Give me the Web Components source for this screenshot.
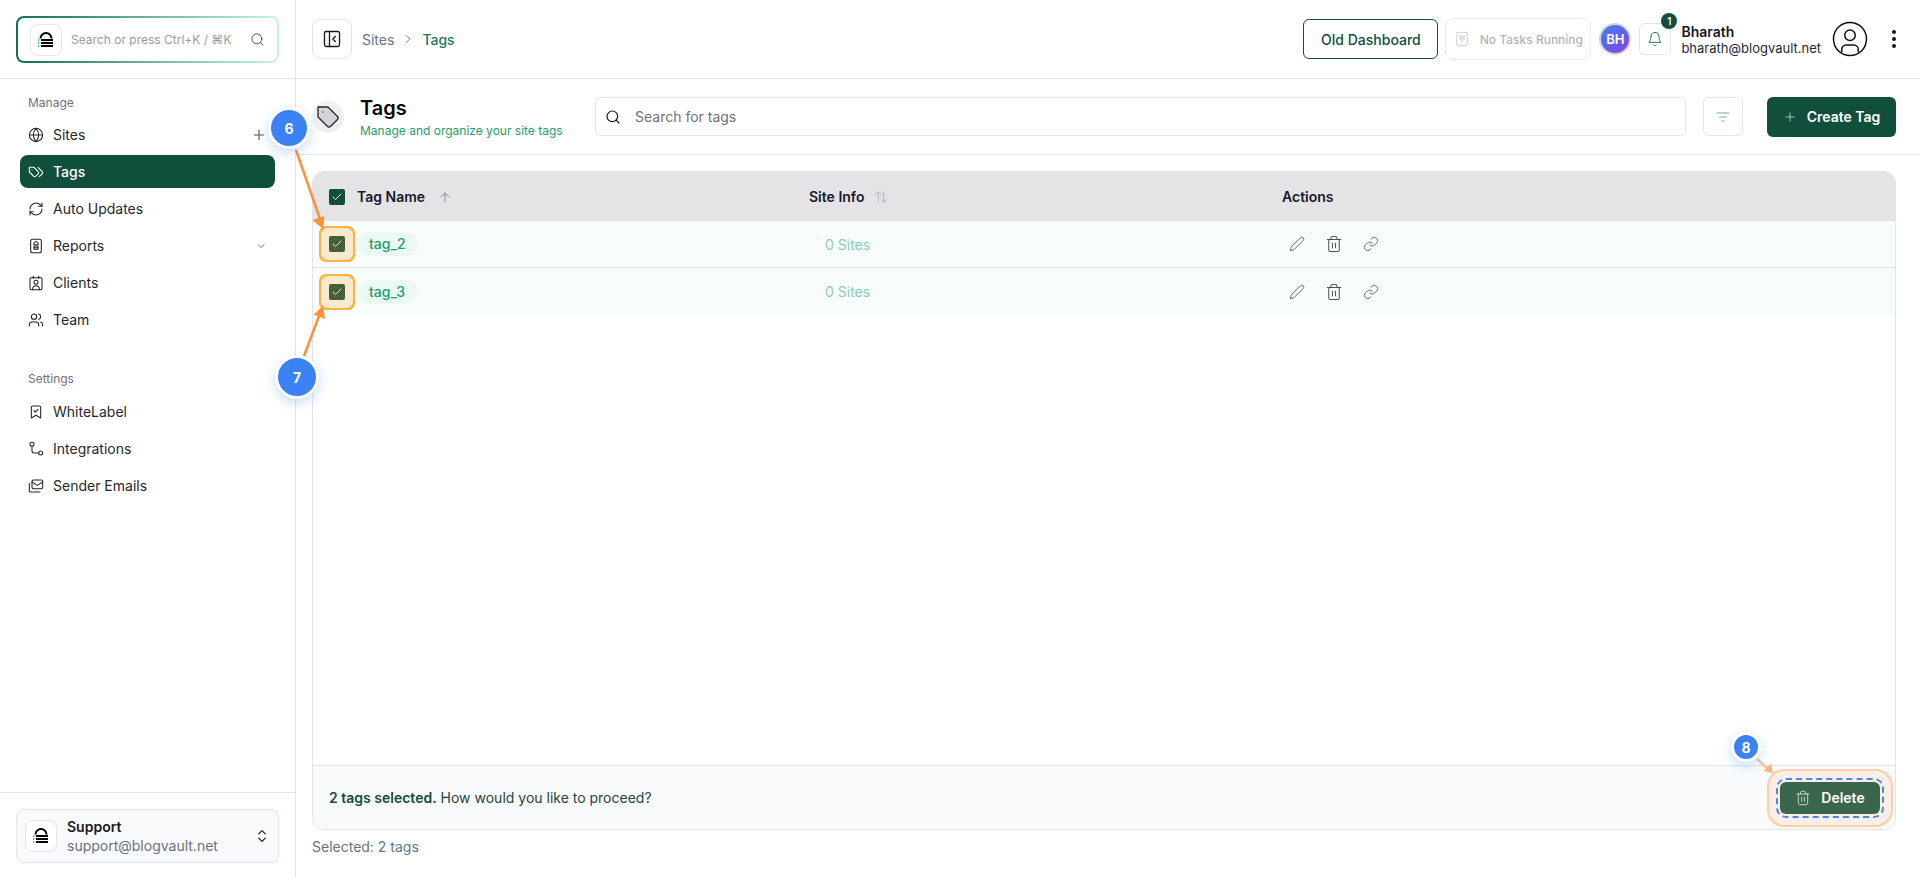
<!DOCTYPE html>
<html lang="en">
<head>
<meta charset="utf-8">
<title>Tags</title>
<style>
  html,body{margin:0;height:100%;overflow:hidden;background:#fff;}
  body{font-family:Inter,"Liberation Sans",sans-serif;color:#18181b;}
</style>
</head>
<body>
<app-shell>
  <side-bar slot="side"></side-bar>
  <top-bar slot="top"></top-bar>
  <page-head slot="main"></page-head>
  <tags-table slot="main"></tags-table>
</app-shell>
<step-overlay></step-overlay>

<script>
(function(document){
  'use strict';

  const P = {
    globe:'<circle cx="12" cy="12" r="10"/><path d="M2 12h20"/><path d="M12 2a15.3 15.3 0 0 1 4 10 15.3 15.3 0 0 1-4 10 15.3 15.3 0 0 1-4-10 15.3 15.3 0 0 1 4-10z"/>',
    tags:'<path d="M9 5H2v7l6.29 6.29c.94.94 2.48.94 3.42 0l3.58-3.58c.94-.94.94-2.48 0-3.42L9 5Z"/><path d="M6 9.01V9"/><path d="m15 5 6.3 6.3a2.4 2.4 0 0 1 0 3.4L17 19"/>',
    refresh:'<path d="M3 12a9 9 0 0 1 9-9 9.75 9.75 0 0 1 6.74 2.74L21 8"/><path d="M21 3v5h-5"/><path d="M21 12a9 9 0 0 1-9 9 9.75 9.75 0 0 1-6.74-2.74L3 16"/><path d="M8 16H3v5"/>',
    report:'<rect x="4" y="2" width="16" height="20" rx="3"/><path d="M12 5l3 2v3H9V7z"/><rect x="9" y="12" width="6" height="5"/><path d="M9 14.500h6"/>',
    clients:'<path d="M16 2v3"/><path d="M8 2v3"/><rect x="3" y="4" width="18" height="18" rx="2"/><circle cx="12" cy="11" r="3"/><path d="M7 22v-1a5 5 0 0 1 10 0v1"/>',
    team:'<path d="M16 21v-2a4 4 0 0 0-4-4H6a4 4 0 0 0-4 4v2"/><circle cx="9" cy="7" r="4"/><path d="M22 21v-2a4 4 0 0 0-3-3.870"/><path d="M16 3.130a4 4 0 0 1 0 7.750"/>',
    bookmark:'<path d="m19 21-7-4-7 4V5a2 2 0 0 1 2-2h10a2 2 0 0 1 2 2v16z"/><path d="m9 10 2 2 4-4"/>',
    route:'<circle cx="6" cy="5" r="3"/><circle cx="19" cy="18" r="3"/><path d="M6 8v7a3 3 0 0 0 3 3h7"/>',
    mails:'<rect x="6" y="3" width="16" height="13" rx="2"/><path d="m6 6 8 5 8-5"/><path d="M2 8v11a2 2 0 0 0 2 2h14"/>',
    search:'<circle cx="11" cy="11" r="8"/><path d="m21 21-4.300-4.300"/>',
    panel:'<rect x="3" y="3" width="18" height="18" rx="2"/><path d="M9 3v18"/><path d="m16 15-3-3 3-3"/>',
    bell:'<path d="M6 8a6 6 0 0 1 12 0c0 7 3 9 3 9H3s3-2 3-9"/><path d="M10.300 21a1.940 1.940 0 0 0 3.400 0"/>',
    pencil:'<path d="M17 3a2.850 2.830 0 1 1 4 4L7.500 20.500 2 22l1.500-5.500Z"/>',
    trash:'<path d="M3 6h18"/><path d="M19 6v14c0 1-1 2-2 2H7c-1 0-2-1-2-2V6"/><path d="M8 6V4c0-1 1-2 2-2h4c1 0 2 1 2 2v2"/><path d="M10 11v6"/><path d="M14 11v6"/>',
    link:'<path d="M10 13a5 5 0 0 0 7.540.540l3-3a5 5 0 0 0-7.070-7.070l-1.720 1.710"/><path d="M14 11a5 5 0 0 0-7.540-.540l-3 3a5 5 0 0 0 7.070 7.070l1.710-1.710"/>',
    filter:'<path d="M3 6h18"/><path d="M7 12h10"/><path d="M10 18h4"/>',
    updown:'<path d="m7 15 5 5 5-5"/><path d="m7 9 5-5 5 5"/>',
    down:'<path d="m6 9 6 6 6-6"/>',
    plus:'<path d="M5 12h14"/><path d="M12 5v14"/>',
    right:'<path d="m9 18 6-6-6-6"/>',
    up:'<path d="M12 20V5"/><path d="m5 12 7-7 7 7"/>',
    sort:'<path d="M8 20V4"/><path d="m3 9 5-5 5 5"/><path d="M16 4v16"/><path d="m11 15 5 5 5-5"/>',
    cpu:'<rect x="4" y="2" width="16" height="20" rx="2" stroke-dasharray="2 2"/><path d="M9 7v6"/><path d="M12 7v9"/><path d="M15 7v6"/>',
    check:'<path d="M20 6 9 17l-5-5"/>',
    tagbig:'<path d="M12 2H2v10l9.290 9.290c.940.940 2.480.940 3.420 0l6.580-6.580c.940-.940.940-2.480 0-3.420L12 2Z" fill="#d4d4d8"/><path d="M7 7h.01"/>',
    user:'<circle cx="12" cy="12" r="11"/><circle cx="12" cy="9.500" r="3.500"/><path d="M6.500 20.500v-1.500a3 3 0 0 1 3-3h5a3 3 0 0 1 3 3v1.500"/>'
  };

  class UiIcon extends HTMLElement{
    constructor(){
      super();
      const s = this.getAttribute('size') || 16;
      const w = this.getAttribute('weight') || 1.6;
      this.attachShadow({mode:'open'}).innerHTML = `
        <style>:host{display:inline-flex;flex:none;width:${s}px;height:${s}px;}svg{display:block;}</style>
        <svg width="${s}" height="${s}" viewBox="0 0 24 24" fill="none" stroke="currentColor" stroke-width="${w}" stroke-linecap="round" stroke-linejoin="round">${P[this.getAttribute('name')]}</svg>`;
    }
  }

  class BvLogo extends HTMLElement{
    constructor(){
      super();
      this.attachShadow({mode:'open'}).innerHTML = `
        <style>
          :host{display:flex;flex:none;width:30px;height:30px;align-items:center;justify-content:center;background:#fff;border:1px solid #e4e4e7;border-radius:8px;}
        </style>
        <svg width="16" height="18" viewBox="0 0 16 18" fill="none">
          <path d="M2.500 7.500a5.500 5.500 0 0 1 11 0" stroke="#000" stroke-width="2"/>
          <path d="M3 9h12M3 12h12M3 15h12" stroke="#000" stroke-width="2"/>
          <path d="M0 9h2M0 12h2M0 15h2" stroke="#22a884" stroke-width="1.500" stroke-dasharray="1 .6"/>
        </svg>`;
    }
  }

  class AppShell extends HTMLElement{
    constructor(){
      super();
      this.attachShadow({mode:'open'}).innerHTML = `
        <style>
          :host{display:flex;width:1920px;height:878px;overflow:hidden;}
          .side{flex:none;width:295px;border-right:1px solid #e2e5ee;}
          .right{flex:1;min-width:0;display:flex;flex-direction:column;}
        </style>
        <div class="side"><slot name="side"></slot></div>
        <div class="right"><slot name="top"></slot><slot name="main"></slot></div>`;
    }
  }

  class NavItem extends HTMLElement{
    constructor(){
      super();
      const on = this.hasAttribute('active');
      this.attachShadow({mode:'open'}).innerHTML = `
        <style>
          :host{display:flex;align-items:center;gap:9px;height:33px;margin-bottom:4px;padding:0 8px;border-radius:8px;font-size:14px;color:${on?'#fff':'#27272a'};background:${on?'#104f3c':'transparent'};font-weight:${on?500:400};}
          .t{flex:1;}
          .e{display:flex;color:#52525b;}
        </style>
        <ui-icon name="${this.getAttribute('icon')}" size="16"></ui-icon>
        <span class="t"><slot></slot></span>
        <span class="e"><slot name="end"></slot></span>`;
    }
  }

  class SideBar extends HTMLElement{
    constructor(){
      super();
      this.attachShadow({mode:'open'}).innerHTML = `
        <style>
          :host{display:flex;flex-direction:column;height:878px;}
          .top{height:79px;box-sizing:border-box;padding:16px 16px 0;border-bottom:1px solid #e4e4e7;}
          .box{display:flex;align-items:center;height:47px;box-sizing:border-box;padding:0 12px;gap:9px;border:2px solid transparent;border-radius:8px;background:linear-gradient(#fff,#fff) padding-box,linear-gradient(90deg,#12704f,#c8f5e0) border-box;font-size:12px;color:#9a9aa2;}
          .box span{flex:1;white-space:nowrap;}
          .box ui-icon{color:#52525b;}
          nav{flex:1;padding:15px 20px 0;}
          h4{margin:0;height:18px;line-height:18px;padding:0 8px;margin-bottom:6px;font-size:12px;font-weight:400;color:#71717a;}
          h4.s{margin-top:34px;margin-bottom:7px;}
          .foot{height:86px;box-sizing:border-box;padding:16px;border-top:1px solid #e2e5ee;}
          .card{display:flex;align-items:center;height:54px;box-sizing:border-box;padding:0 8px;gap:10px;border:1px solid #e2e5ee;border-radius:8px;background:#f9fafb;}
          .who{flex:1;line-height:19px;}
          .who b{display:block;font-size:14px;font-weight:600;color:#18181b;}
          .who i{display:block;font-style:normal;font-size:14px;color:#6b7280;}
          .card ui-icon{color:#27272a;}
        </style>
        <div class="top">
          <div class="box"><bv-logo></bv-logo><span>Search or press Ctrl+K / ⌘K</span><ui-icon name="search" size="15"></ui-icon></div>
        </div>
        <nav>
          <h4>Manage</h4>
          <nav-item icon="globe">Sites<ui-icon slot="end" name="plus" size="16"></ui-icon></nav-item>
          <nav-item icon="tags" active>Tags</nav-item>
          <nav-item icon="refresh">Auto Updates</nav-item>
          <nav-item icon="report">Reports<ui-icon slot="end" name="down" size="12"></ui-icon></nav-item>
          <nav-item icon="clients">Clients</nav-item>
          <nav-item icon="team">Team</nav-item>
          <h4 class="s">Settings</h4>
          <nav-item icon="bookmark">WhiteLabel</nav-item>
          <nav-item icon="route">Integrations</nav-item>
          <nav-item icon="mails">Sender Emails</nav-item>
        </nav>
        <div class="foot">
          <div class="card">
            <bv-logo></bv-logo>
            <div class="who"><b>Support</b><i>support@blogvault.net</i></div>
            <ui-icon name="updown" size="16"></ui-icon>
          </div>
        </div>`;
    }
  }

  class TopBar extends HTMLElement{
    constructor(){
      super();
      this.attachShadow({mode:'open'}).innerHTML = `
        <style>
          :host{display:flex;align-items:center;height:79px;box-sizing:border-box;padding:0 24px 0 16px;border-bottom:1px solid #e4e4e7;font-size:14px;flex:none;}
          .toggle{display:flex;align-items:center;justify-content:center;width:40px;height:40px;box-sizing:border-box;border:1px solid #e4e4e7;border-radius:8px;color:#18181b;}
          .crumb{flex:1;display:flex;align-items:center;gap:7px;margin-left:10px;color:#64748b;}
          .crumb b{font-weight:500;color:#1f7a5c;}
          .crumb ui-icon{color:#71717a;}
          .old{display:flex;align-items:center;justify-content:center;width:135px;height:40px;box-sizing:border-box;border:1px solid #104f3c;border-radius:6px;color:#104f3c;font-weight:500;}
          .tasks{display:flex;align-items:center;justify-content:center;gap:10px;width:146px;height:42px;box-sizing:border-box;margin-left:7px;border:1px solid #ececee;border-radius:8px;color:#b4b4b8;font-size:12px;font-weight:500;}
          .av{display:flex;align-items:center;justify-content:center;width:28px;height:28px;margin-left:8px;border-radius:50%;border:2px solid #d4d4dc;background:linear-gradient(135deg,#3b82f6,#8b3fe0);color:#fff;font-size:13px;font-weight:600;}
          .bell{position:relative;display:flex;align-items:center;justify-content:center;width:32px;height:32px;box-sizing:border-box;margin-left:8px;border:1px solid #e4e4e7;border-radius:6px;color:#1f6b52;}
          .bell em{position:absolute;top:-11px;right:-7px;width:16px;height:16px;border-radius:50%;background:#104f3c;color:#fff;font:500 11px/16px Inter,sans-serif;text-align:center;}
          .me{margin-left:10px;line-height:16px;font-size:13px;color:#1f2937;}
          .me b{display:block;font-size:14px;line-height:17px;font-weight:600;color:#18181b;}
          .u{margin-left:11px;color:#111;}
          .k{display:flex;flex-direction:column;gap:3px;margin-left:24px;}
          .k i{width:4px;height:4px;border-radius:50%;background:#18181b;}
        </style>
        <div class="toggle"><ui-icon name="panel" size="20"></ui-icon></div>
        <div class="crumb"><span>Sites</span><ui-icon name="right" size="14"></ui-icon><b>Tags</b></div>
        <div class="old">Old Dashboard</div>
        <div class="tasks"><ui-icon name="cpu" size="16" weight="1.200"></ui-icon>No Tasks Running</div>
        <div class="av">BH</div>
        <div class="bell"><ui-icon name="bell" size="16" weight="1.400"></ui-icon><em>1</em></div>
        <div class="me"><b>Bharath</b>bharath@blogvault.net</div>
        <ui-icon class="u" name="user" size="36" weight="1"></ui-icon>
        <div class="k"><i></i><i></i><i></i></div>`;
    }
  }

  class PageHead extends HTMLElement{
    constructor(){
      super();
      this.attachShadow({mode:'open'}).innerHTML = `
        <style>
          :host{display:flex;align-items:center;height:76px;box-sizing:border-box;padding:0 24px 0 16px;border-bottom:1px solid #e4e4e7;flex:none;}
          .ic{display:flex;align-items:center;justify-content:center;width:32px;height:32px;border-radius:50%;background:#f0f0f1;color:#27272a;}
          .tt{width:235px;margin-left:16px;}
          h1{margin:0;font-size:20px;line-height:26px;font-weight:600;color:#09090b;}
          p{margin:2px 0 0;font-size:12px;line-height:16px;color:#1f9e6e;white-space:nowrap;}
          .q{display:flex;align-items:center;flex:1;height:39px;box-sizing:border-box;padding:0 9px;gap:14px;border:1px solid #e2e5ee;border-radius:6px;font-size:14px;color:#71717a;}
          .q ui-icon{color:#18181b;}
          .f{display:flex;align-items:center;justify-content:center;width:40px;height:39px;box-sizing:border-box;margin-left:17px;border:1px solid #e2e5ee;border-radius:6px;color:#7fa898;}
          .c{display:flex;align-items:center;justify-content:center;gap:10px;width:129px;height:40px;margin-left:24px;border-radius:6px;background:#104f3c;color:#fff;font-size:14px;font-weight:600;}
          .c ui-icon{color:#a9c4ba;}
        </style>
        <div class="ic"><ui-icon name="tagbig" size="24" weight="1.300"></ui-icon></div>
        <div class="tt"><h1>Tags</h1><p>Manage and organize your site tags</p></div>
        <div class="q"><ui-icon name="search" size="16" weight="1.800"></ui-icon>Search for tags</div>
        <div class="f"><ui-icon name="filter" size="16"></ui-icon></div>
        <div class="c"><ui-icon name="plus" size="14"></ui-icon>Create Tag</div>`;
    }
  }

  class CheckBox extends HTMLElement{
    constructor(){
      super();
      const mark = this.hasAttribute('marked');
      this.attachShadow({mode:'open'}).innerHTML = `
        <style>
          :host{display:flex;align-items:center;justify-content:center;flex:none;width:16px;height:16px;border-radius:2px;background:${mark?'#45603a':'#104f3c'};color:${mark?'#f3e3c4':'#fff'};}
          :host([marked]){box-shadow:0 0 0 8px #f9e9cd,0 0 0 10px #fbb346;border-radius:2px;}
        </style>
        <ui-icon name="check" size="12" weight="2"></ui-icon>`;
    }
  }

  class TagRow extends HTMLElement{
    constructor(){
      super();
      this.attachShadow({mode:'open'}).innerHTML = `
        <style>
          :host{display:grid;grid-template-columns:496px 473px 1fr;align-items:center;height:47px;box-sizing:border-box;background:#f8fdfb;}
          :host(:not(:last-child)){border-bottom:1px solid #e4e4e7;}
          .a{display:flex;align-items:center;gap:12px;padding-left:16px;}
          .pill{padding:0 12px;height:24px;line-height:24px;border-radius:12px;background:#ecf8f3;color:#1f9e6e;font-size:14px;font-weight:500;}
          .s{padding-left:16px;font-size:14px;color:#86d1b2;}
          .x{display:flex;align-items:center;gap:20px;padding-left:7px;color:#52525b;}
        </style>
        <div class="a"><check-box marked></check-box><span class="pill"><slot></slot></span></div>
        <div class="s">0 Sites</div>
        <div class="x"><ui-icon name="pencil" size="16" weight="1.300"></ui-icon><ui-icon name="trash" size="18" weight="1.400"></ui-icon><ui-icon name="link" size="16" weight="1.200"></ui-icon></div>`;
    }
  }

  class TagsTable extends HTMLElement{
    constructor(){
      super();
      this.attachShadow({mode:'open'}).innerHTML = `
        <style>
          :host{display:block;padding:16px 24px 0 16px;flex:none;}
          .t{display:flex;flex-direction:column;height:659px;box-sizing:border-box;border:1px solid #e4e4e7;border-radius:12px;overflow:hidden;}
          .h{display:grid;grid-template-columns:496px 473px 1fr;align-items:center;height:49px;flex:none;background:#e4e4e7;font-size:14px;font-weight:600;color:#18182b;}
          .h>div{display:flex;align-items:center;}
          .n{gap:12px;padding-left:16px;}
          .n ui-icon,.i ui-icon{margin-left:1px;}
          .n ui-icon{color:#85858c;}
          .i{gap:8px;}
          .i ui-icon{color:#a1a1aa;}
          .r{flex:1;}
          .f{display:flex;align-items:center;justify-content:space-between;height:64px;flex:none;box-sizing:border-box;padding:0 16px;border-top:1px solid #e4e4e7;background:#f9fafb;font-size:14px;color:#27453b;}
          .f b{font-weight:600;color:#104f3c;}
          .d{display:flex;align-items:center;justify-content:center;gap:10px;width:100px;height:32px;margin-right:-1px;border-radius:6px;background:#3b664e;color:#fff;font-size:14px;font-weight:600;outline:2px dashed #4f84e8;outline-offset:2px;box-shadow:0 0 0 11px #f9efe8,0 0 0 13px #fbd0ad;}
          .d ui-icon{color:#d8e2dc;}
          .sel{margin-top:8px;font-size:14px;line-height:17px;color:#64748b;}
        </style>
        <div class="t">
          <div class="h">
            <div class="n"><check-box></check-box><span>Tag Name</span><ui-icon name="up" size="14"></ui-icon></div>
            <div class="i"><span>Site Info</span><ui-icon name="sort" size="16" weight="1"></ui-icon></div>
            <div>Actions</div>
          </div>
          <div class="r">
            <tag-row>tag_2</tag-row>
            <tag-row>tag_3</tag-row>
          </div>
          <div class="f"><span><b>2 tags selected.</b> How would you like to proceed?</span>
            <div class="d"><ui-icon name="trash" size="16" weight="1.300"></ui-icon>Delete</div>
          </div>
        </div>
        <div class="sel">Selected: 2 tags</div>`;
    }
  }

  class StepBadge extends HTMLElement{
    constructor(){
      super();
      const d = +this.getAttribute('d');
      this.attachShadow({mode:'open'}).innerHTML = `
        <style>
          :host{position:absolute;left:${this.getAttribute('x')-d/2}px;top:${this.getAttribute('y')-d/2}px;display:flex;align-items:center;justify-content:center;width:${d}px;height:${d}px;box-sizing:border-box;border:3px solid #fff;border-radius:50%;background:#3b82f6;color:#fff;font-size:14px;font-weight:700;box-shadow:0 4px 12px rgba(59,130,246,.28);}
        </style><slot></slot>`;
    }
  }

  // arrows and numbered badges lying over the page
  class StepOverlay extends HTMLElement{
    constructor(){
      super();
      this.attachShadow({mode:'open'}).innerHTML = `
        <style>
          :host{position:absolute;left:0;top:0;width:1920px;height:878px;pointer-events:none;}
          svg{position:absolute;left:0;top:0;}
        </style>
        <svg width="1920" height="878" fill="none">
          <path d="M296 150 L320 219" stroke="#fb923c" stroke-width="2.500"/>
          <path d="M323 229 L312.500 220 L324.500 216 Z" fill="#fb923c"/>
          <path d="M304 356 L319 316" stroke="#fb923c" stroke-width="2.500"/>
          <path d="M323 306 L325 319 L313.500 314.500 Z" fill="#fb923c"/>
          <path d="M1757 759 L1767 768" stroke="#f8c49c" stroke-width="2.500"/>
          <path d="M1773 773 L1763.500 771 L1771 763.500 Z" fill="#f9b382"/>
        </svg>
        <step-badge x="289" y="128" d="42">6</step-badge>
        <step-badge x="297" y="377" d="44">7</step-badge>
        <step-badge x="1746" y="747" d="30">8</step-badge>`;
    }
  }

  customElements.define('ui-icon', UiIcon);
  customElements.define('bv-logo', BvLogo);
  customElements.define('nav-item', NavItem);
  customElements.define('side-bar', SideBar);
  customElements.define('top-bar', TopBar);
  customElements.define('page-head', PageHead);
  customElements.define('check-box', CheckBox);
  customElements.define('tag-row', TagRow);
  customElements.define('tags-table', TagsTable);
  customElements.define('step-badge', StepBadge);
  customElements.define('step-overlay', StepOverlay);
  customElements.define('app-shell', AppShell);
})(document);
</script>
</body>
</html>
